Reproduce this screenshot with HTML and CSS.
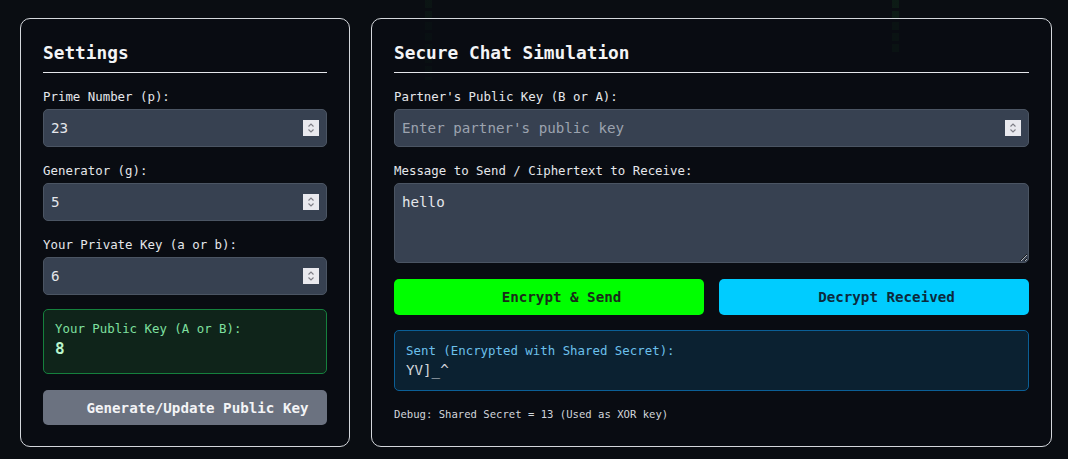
FILE: index.html
```html
<!DOCTYPE html>
<html lang="en">
<head>
<meta charset="utf-8">
<title>Diffie-Hellman Secure Chat</title>
<link rel="stylesheet" href="styles.css">
</head>
<body>
<div class="rain" aria-hidden="true">
  <div class="drop drop-a"></div>
  <div class="drop drop-b"></div>
</div>
<main class="layout">
  <section class="card">
    <h2 class="card-title">Settings</h2>
    <div class="field">
      <label class="label" for="p">Prime Number (p):</label>
      <div class="input-wrap">
        <input class="input" id="p" type="number" value="23">
        <svg class="spin" viewBox="0 0 16 16" aria-hidden="true"><rect width="16" height="16" fill="#e9e9ee"/><path d="M5.5 6.5 L8 4 L10.5 6.5 M5.5 9.5 L8 12 L10.5 9.5" fill="none" stroke="#7d7d85" stroke-width="1.1"/></svg>
      </div>
    </div>
    <div class="field">
      <label class="label" for="g">Generator (g):</label>
      <div class="input-wrap">
        <input class="input" id="g" type="number" value="5">
        <svg class="spin" viewBox="0 0 16 16" aria-hidden="true"><rect width="16" height="16" fill="#e9e9ee"/><path d="M5.5 6.5 L8 4 L10.5 6.5 M5.5 9.5 L8 12 L10.5 9.5" fill="none" stroke="#7d7d85" stroke-width="1.1"/></svg>
      </div>
    </div>
    <div class="field">
      <label class="label" for="priv">Your Private Key (a or b):</label>
      <div class="input-wrap">
        <input class="input" id="priv" type="number" value="6">
        <svg class="spin" viewBox="0 0 16 16" aria-hidden="true"><rect width="16" height="16" fill="#e9e9ee"/><path d="M5.5 6.5 L8 4 L10.5 6.5 M5.5 9.5 L8 12 L10.5 9.5" fill="none" stroke="#7d7d85" stroke-width="1.1"/></svg>
      </div>
    </div>
    <div class="pubkey">
      <div class="pubkey-label">Your Public Key (A or B):</div>
      <div class="pubkey-value">8</div>
    </div>
    <button class="btn btn-gray">Generate/Update Public Key</button>
  </section>

  <section class="card">
    <h2 class="card-title">Secure Chat Simulation</h2>
    <div class="field">
      <label class="label" for="partner">Partner's Public Key (B or A):</label>
      <div class="input-wrap">
        <input class="input" id="partner" type="number" placeholder="Enter partner's public key">
        <svg class="spin" viewBox="0 0 16 16" aria-hidden="true"><rect width="16" height="16" fill="#e9e9ee"/><path d="M5.5 6.5 L8 4 L10.5 6.5 M5.5 9.5 L8 12 L10.5 9.5" fill="none" stroke="#7d7d85" stroke-width="1.1"/></svg>
      </div>
    </div>
    <div class="field">
      <label class="label" for="msg">Message to Send / Ciphertext to Receive:</label>
      <textarea class="textarea" id="msg">hello</textarea>
    </div>
    <div class="actions">
      <button class="btn btn-green">Encrypt &amp; Send</button>
      <button class="btn btn-cyan">Decrypt Received</button>
    </div>
    <div class="output">
      <div class="output-label">Sent (Encrypted with Shared Secret):</div>
      <div class="output-value">YV]_^</div>
    </div>
    <div class="debug">Debug: Shared Secret = 13 (Used as XOR key)</div>
  </section>
</main>
</body>
</html>
```

FILE: styles.css
```css
* { box-sizing: border-box; }

html, body {
  margin: 0;
  background: #0a0d12;
  color: #e5e7eb;
  font-family: "DejaVu Sans Mono", "Liberation Mono", monospace;
}

body {
  position: relative;
  min-height: 459px;
  overflow: hidden;
}

.rain {
  position: absolute;
  inset: 0;
  pointer-events: none;
}

.drop {
  position: absolute;
  top: 0;
  width: 7px;
  background: repeating-linear-gradient(180deg, rgba(40, 190, 60, 0.045) 0 8px, transparent 8px 11px);
}

.drop-a { left: 425px; height: 80px; }
.drop-b { left: 892px; height: 52px; background: repeating-linear-gradient(180deg, rgba(40, 190, 60, 0.08) 0 8px, transparent 8px 11px); }

.layout {
  position: relative;
  display: grid;
  grid-template-columns: 330px 681px;
  gap: 21px;
  padding: 18px 0 0 20px;
}

.card {
  border: 1px solid #d4d7dc;
  border-radius: 10px;
  background: rgba(10, 13, 18, 0.55);
  padding: 20px 22px 21px;
  display: flex;
  flex-direction: column;
}

.card-title {
  margin: 0 0 15px;
  padding-bottom: 6px;
  border-bottom: 1px solid #e5e7eb;
  font-size: 17.8px;
  line-height: 27px;
  font-weight: bold;
  color: #f3f4f6;
}

.field {
  display: flex;
  flex-direction: column;
  margin-bottom: 15px;
}

.label {
  font-size: 12.4px;
  line-height: 18px;
  margin-bottom: 3px;
  color: #e5e7eb;
}

.input-wrap {
  position: relative;
  display: flex;
  flex-direction: column;
}

.spin {
  position: absolute;
  right: 8px;
  top: 11px;
  width: 16px;
  height: 16px;
}

.input, .textarea {
  font-family: inherit;
  font-size: 14.2px;
  color: #e5e7eb;
  background: #374151;
  border: 1px solid #4b5563;
  border-radius: 5px;
  outline: none;
}

.input {
  height: 38px;
  padding: 0 30px 0 7px;
  appearance: textfield;
  -moz-appearance: textfield;
}

.input::-webkit-inner-spin-button,
.input::-webkit-outer-spin-button {
  -webkit-appearance: none;
  margin: 0;
}

.input::placeholder { color: #9ca3af; }

.textarea {
  height: 80px;
  padding: 8px 7px;
  line-height: 20px;
  resize: vertical;
}

.pubkey {
  border: 1px solid #15803d;
  border-radius: 5px;
  background: #0f241a;
  padding: 10px 11px 13px;
  margin-top: -1px;
  margin-bottom: 16px;
}

.pubkey-label {
  font-size: 12.4px;
  line-height: 18px;
  color: #7fe0a0;
}

.pubkey-value {
  font-size: 16px;
  line-height: 22px;
  font-weight: bold;
  color: #b9f5cc;
}

.btn {
  font-family: inherit;
  font-size: 14.2px;
  font-weight: bold;
  height: 35px;
  border: none;
  border-radius: 5px;
  padding: 0 0 0 25px;
  text-align: center;
  cursor: pointer;
}

.btn-gray {
  background: #6b7280;
  color: #f3f4f6;
}

.actions {
  display: grid;
  grid-template-columns: 1fr 1fr;
  gap: 15px;
  margin-top: 1px;
  margin-bottom: 15px;
}

.actions .btn { height: 36px; }

.btn-green {
  background: #00ff00;
  color: #1a2a1a;
}

.btn-cyan {
  background: #00ccff;
  color: #0c2a3c;
}

.output {
  border: 1px solid #0b5f96;
  border-radius: 5px;
  background: #0b2131;
  padding: 11px 11px 10px;
  margin-bottom: 15px;
}

.output-label {
  font-size: 12.4px;
  line-height: 18px;
  color: #6cc0ec;
}

.output-value {
  font-size: 14.2px;
  line-height: 20px;
  color: #d1d5db;
}

.debug {
  font-size: 10.6px;
  line-height: 16px;
  color: #d1d5db;
}
```
